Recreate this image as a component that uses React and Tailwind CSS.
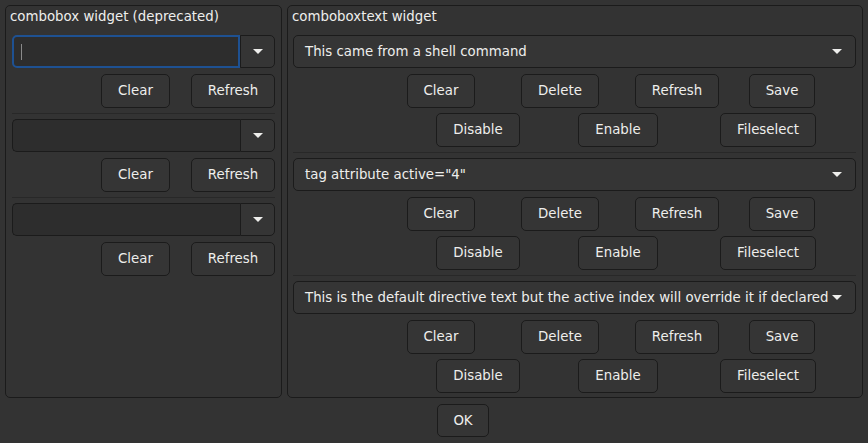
const Arrow = () => (
  <svg width="10" height="5" viewBox="0 0 10 5" className="shrink-0">
    <path d="M0 0h10L5 5z" fill="#eeeeec" />
  </svg>
);

const Button = ({ label, w, h = 'h-[34px]', className = '' }) => (
  <button
    type="button"
    className={`${w} ${h} ${className} shrink-0 rounded-[5px] border border-[#1b1b1b] bg-[#353535] text-center text-[#eeeeec]`}
  >
    {label}
  </button>
);

const Separator = ({ className = '' }) => <div className={`h-px bg-[#282828] ${className}`} />;

// entry + dropdown button, the old GtkComboBox with has-entry
const EntryCombo = ({ focused }) => (
  <div className="flex h-[33px]">
    <div
      className={`flex flex-1 items-center rounded-l-[5px] bg-[#2d2d2d] pl-[7px] ${
        focused ? 'border-2 border-[#1e5192]' : 'border border-r-0 border-[#1b1b1b]'
      }`}
    >
      {focused && <div className="h-[16px] w-px bg-[#8a8a8a]" />}
    </div>
    <div className="flex w-[35px] items-center justify-center rounded-r-[5px] border border-[#1b1b1b] bg-[#353535]">
      <Arrow />
    </div>
  </div>
);

const TextCombo = ({ text }) => (
  <div className="flex h-[33px] items-center justify-between rounded-[5px] border border-[#1b1b1b] bg-[#353535] pl-[11px] pr-[13px]">
    <span className="whitespace-nowrap">{text}</span>
    <Arrow />
  </div>
);

const Frame = ({ title, className, bodyClass, children }) => (
  <div className={`flex h-[393px] flex-col rounded-[5px] border border-[#1b1b1b] ${className}`}>
    <div className="h-[29px] pl-[4px] pt-[1px] leading-[20px]">{title}</div>
    <div className={`flex flex-col ${bodyClass}`}>{children}</div>
  </div>
);

const LeftBlock = ({ focused, last }) => (
  <>
    <EntryCombo focused={focused} />
    <div className="mt-[6px] flex h-[34px] justify-end gap-[21px]">
      <Button label="Clear" w="w-[69px]" />
      <Button label="Refresh" w="w-[84px]" />
    </div>
    {!last && <Separator className="my-[5px]" />}
  </>
);

const RightBlock = ({ text, last }) => (
  <>
    <TextCombo text={text} />
    <div className="mt-[6px] flex h-[34px] pl-[114px]">
      <Button label="Clear" w="w-[68px]" />
      <Button label="Delete" w="w-[78px]" className="ml-[46px]" />
      <Button label="Refresh" w="w-[84px]" className="ml-[36px]" />
      <Button label="Save" w="w-[66px]" className="ml-[30px]" />
    </div>
    <div className="mt-[5px] flex h-[34px] pl-[143px]">
      <Button label="Disable" w="w-[84px]" />
      <Button label="Enable" w="w-[80px]" className="ml-[58px]" />
      <Button label="Fileselect" w="w-[96px]" className="ml-[62px]" />
    </div>
    {!last && <Separator className="my-[5px]" />}
  </>
);

export default function App() {
  return (
    <div
      className="h-[443px] w-[868px] overflow-hidden bg-[#333333] text-[13.33px] text-[#eeeeec]"
      style={{ fontFamily: '"DejaVu Sans", sans-serif' }}
    >
      <div className="flex gap-[5px] px-[5px] pt-[5px]">
        <Frame title="combobox widget (deprecated)" className="w-[277px]" bodyClass="px-[6px]">
          <LeftBlock focused />
          <LeftBlock />
          <LeftBlock last />
        </Frame>
        <Frame title="comboboxtext widget" className="w-[576px]" bodyClass="pl-[5px] pr-[6px]">
          <RightBlock text="This came from a shell command" />
          <RightBlock text={'tag attribute active="4"'} />
          <RightBlock text="This is the default directive text but the active index will override it if declared" last />
        </Frame>
      </div>
      <div className="pl-[437px] pt-[6px]">
        <Button label="OK" w="w-[52px]" h="h-[33px]" />
      </div>
    </div>
  );
}
